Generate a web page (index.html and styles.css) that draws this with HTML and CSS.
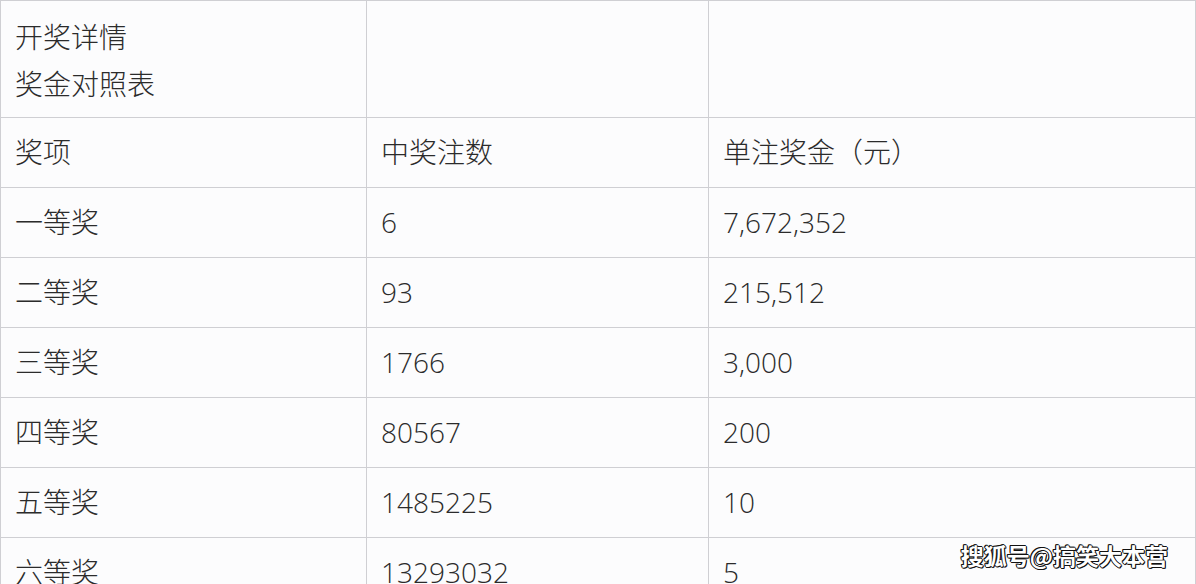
FILE: index.html
```html
<!DOCTYPE html>
<html lang="zh">
<head>
<meta charset="utf-8">
<link rel="stylesheet" href="styles.css">
</head>
<body>
<div class="page">
<table class="prize">
<colgroup><col class="c1"><col class="c2"><col class="c3"></colgroup>
<tr class="head"><td>开奖详情<br>奖金对照表</td><td></td><td></td></tr>
<tr><td>奖项</td><td>中奖注数</td><td>单注奖金（元）</td></tr>
<tr><td>一等奖</td><td>6</td><td>7,672,352</td></tr>
<tr><td>二等奖</td><td>93</td><td>215,512</td></tr>
<tr><td>三等奖</td><td>1766</td><td>3,000</td></tr>
<tr><td>四等奖</td><td>80567</td><td>200</td></tr>
<tr><td>五等奖</td><td>1485225</td><td>10</td></tr>
<tr><td>六等奖</td><td>13293032</td><td>5</td></tr>
</table>
<div class="mark">搜狐号@搞笑大本营</div>
</div>
</body>
</html>
```
FILE: styles.css
```css
html, body { margin: 0; padding: 0; background: #fcfcfd; }
.page { position: relative; width: 1196px; height: 584px; overflow: hidden; }
.prize {
  border-collapse: collapse;
  table-layout: fixed;
  width: 1195px;
  font-family: "Open Sans", "Noto Sans CJK SC", sans-serif;
  font-size: 28px;
  color: #2b2b2b;
  font-weight: 300;
}
.c1 { width: 366px; }
.c2 { width: 342px; }
.c3 { width: 487px; }
.prize td {
  border: 1px solid #cfcfd3;
  padding: 0 14px;
  height: 70px;
  line-height: 47px;
  vertical-align: middle;
  box-sizing: border-box;
  background: #fcfcfd;
}
.prize tr.head td { height: 117px; padding-top: 12px; padding-bottom: 8px; }
.mark {
  position: absolute;
  right: 28px;
  bottom: 12px;
  font-family: "Noto Sans CJK SC", sans-serif;
  font-weight: 700;
  font-size: 23px;
  color: #fff;
  text-shadow: -1px 0 #111, 1px 0 #111, 0 1px #111, 0 -1px #111, 1px 1px #111, -1px -1px #111;
}
```
